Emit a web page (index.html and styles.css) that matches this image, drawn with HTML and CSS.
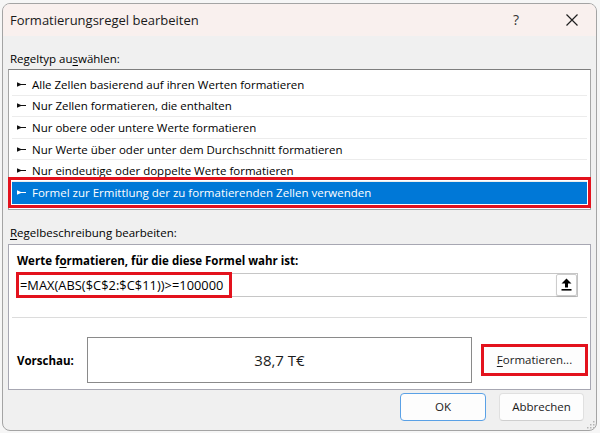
FILE: index.html
```html
<!DOCTYPE html>
<html lang="de">
<head>
<meta charset="utf-8">
<title>Formatierungsregel bearbeiten</title>
<link rel="stylesheet" href="styles.css">
</head>
<body>
<div class="window">
  <div class="titlebar">
    <span class="title">Formatierungsregel bearbeiten</span>
    <span class="help">?</span>
    <span class="close">
      <svg width="12" height="12" viewBox="0 0 12 12"><path d="M0.5 0.5 L11.5 11.5 M11.5 0.5 L0.5 11.5" stroke="#1f1f1f" stroke-width="1.2" fill="none"/></svg>
    </span>
  </div>
  <div class="content">
    <div class="label">Regeltyp au<u>s</u>wählen:</div>
    <div class="list">
      <div class="item"><svg class="arrow" viewBox="0 0 9 5"><path d="M0 0.3 L4 1.9 L9 1.9 L9 3.1 L4 3.1 L0 4.7 Z"/></svg><span>Alle Zellen basierend auf ihren Werten formatieren</span></div>
      <div class="item"><svg class="arrow" viewBox="0 0 9 5"><path d="M0 0.3 L4 1.9 L9 1.9 L9 3.1 L4 3.1 L0 4.7 Z"/></svg><span>Nur Zellen formatieren, die enthalten</span></div>
      <div class="item"><svg class="arrow" viewBox="0 0 9 5"><path d="M0 0.3 L4 1.9 L9 1.9 L9 3.1 L4 3.1 L0 4.7 Z"/></svg><span>Nur obere oder untere Werte formatieren</span></div>
      <div class="item"><svg class="arrow" viewBox="0 0 9 5"><path d="M0 0.3 L4 1.9 L9 1.9 L9 3.1 L4 3.1 L0 4.7 Z"/></svg><span>Nur Werte über oder unter dem Durchschnitt formatieren</span></div>
      <div class="item"><svg class="arrow" viewBox="0 0 9 5"><path d="M0 0.3 L4 1.9 L9 1.9 L9 3.1 L4 3.1 L0 4.7 Z"/></svg><span>Nur eindeutige oder doppelte Werte formatieren</span></div>
      <div class="item selected"><svg class="arrow" viewBox="0 0 9 5"><path d="M0 0.3 L4 1.9 L9 1.9 L9 3.1 L4 3.1 L0 4.7 Z"/></svg><span>Formel zur Ermittlung der zu formatierenden Zellen verwenden</span></div>
      <div class="mark mark-list"></div>
    </div>
    <div class="label label-desc"><u>R</u>egelbeschreibung bearbeiten:</div>
    <div class="panel">
      <div class="panel-top">
        <div class="strong">Werte f<u>o</u>rmatieren, für die diese Formel wahr ist:</div>
        <div class="input">
          <span class="formula">=MAX(ABS($C$2:$C$11))&gt;=100000</span>
          <span class="collapse">
            <svg width="11" height="13" viewBox="0 0 11 13"><path d="M5.5 0.5 L10.5 5.5 L7 5.5 L7 9.5 L4 9.5 L4 5.5 L0.5 5.5 Z" fill="#000"/><rect x="0.5" y="11" width="10" height="1.6" fill="#000"/></svg>
          </span>
          <span class="mark mark-formula"></span>
        </div>
      </div>
      <div class="sep"></div>
      <div class="preview-row">
        <span class="strong preview-label">Vorschau:</span>
        <div class="preview-box">38,7 T€</div>
        <div class="fmt-frame"><span class="fmt-btn"><u>F</u>ormatieren...</span></div>
      </div>
    </div>
    <div class="buttons">
      <span class="btn ok">OK</span>
      <span class="btn">Abbrechen</span>
    </div>
  </div>
  <svg class="grip" width="9" height="9" viewBox="0 0 9 9">
    <rect x="7" y="1" width="1.5" height="1.5" fill="#b5b5b5"/>
    <rect x="4" y="4" width="1.5" height="1.5" fill="#b5b5b5"/>
    <rect x="7" y="4" width="1.5" height="1.5" fill="#b5b5b5"/>
    <rect x="1" y="7" width="1.5" height="1.5" fill="#b5b5b5"/>
    <rect x="4" y="7" width="1.5" height="1.5" fill="#b5b5b5"/>
    <rect x="7" y="7" width="1.5" height="1.5" fill="#b5b5b5"/>
  </svg>
</div>
</body>
</html>
```

FILE: styles.css
```css
html, body {
  margin: 0;
  padding: 0;
}
body {
  width: 600px;
  height: 433px;
  overflow: hidden;
  background: #f6f6f6;
  font-family: "Open Sans", "Noto Sans", "Liberation Sans", sans-serif;
  color: #000;
}
u {
  text-decoration: underline;
  text-decoration-thickness: 1px;
  text-underline-offset: 2px;
}
.window {
  position: relative;
  margin: 3px 0 0 2px;
  width: 595px;
  height: 428px;
  box-sizing: border-box;
  border: 1px solid #a4a4a4;
  border-radius: 8px;
  background: #f0f0f0;
  overflow: hidden;
  display: flex;
  flex-direction: column;
}
.titlebar {
  flex: none;
  height: 32px;
  background: #f9f0ee;
  display: flex;
  align-items: center;
  padding-left: 7px;
}
.title {
  flex: 1;
  font-size: 13px;
  color: #1a1a1a;
  line-height: 18px;
}
.help {
  width: 40px;
  margin-right: 12px;
  text-align: center;
  font-size: 14px;
  color: #333;
  line-height: 18px;
}
.close {
  width: 48px;
  height: 32px;
  display: flex;
  align-items: center;
  justify-content: center;
}
.content {
  flex: 1;
  display: flex;
  flex-direction: column;
  padding: 14px 5px 0 5px;
}
.label {
  font-size: 11.5px;
  line-height: 18px;
  padding-left: 2px;
  margin-bottom: 1px;
}
.label-desc {
  margin-top: 14px;
  margin-bottom: 2px;
}
.list {
  position: relative;
  background: #fff;
  border: 1px solid #a6a6a6;
  border-top-color: #7e7e7e;
  padding: 4px 3px 5px 3px;
}
.item {
  box-sizing: border-box;
  height: 21.6px;
  display: flex;
  align-items: center;
  font-size: 11.5px;
  border-bottom: 1px solid #ececec;
}
.item.selected {
  background: #0078d7;
  color: #fff;
  border-bottom: none;
}
.arrow {
  width: 9px;
  height: 5px;
  margin: 0 6px 0 5px;
  fill: #111;
  flex: none;
}
.selected .arrow {
  fill: #fff;
}
.mark {
  position: absolute;
  box-sizing: border-box;
  border: 3px solid #e3121d;
  pointer-events: none;
}
.mark-list {
  left: -1px;
  top: 107px;
  width: 583px;
  height: 31px;
}
.panel {
  background: #fff;
  border: 1px solid #a7a7b2;
}
.panel-top {
  padding: 7px 0 0 8px;
}
.strong {
  font-size: 11.5px;
  font-weight: 700;
  line-height: 18px;
}
.input {
  position: relative;
  margin-top: 3px;
  width: 561px;
  height: 24px;
  box-sizing: border-box;
  border: 1px solid #c6c6c6;
  display: flex;
  align-items: center;
}
.formula {
  flex: 1;
  padding-left: 2px;
  font-size: 12.8px;
  letter-spacing: 0.05px;
}
.collapse {
  width: 21px;
  height: 22px;
  box-sizing: border-box;
  border: 1px solid #cdcdcd;
  border-radius: 2px;
  box-shadow: 0 1px 1px rgba(0,0,0,0.12);
  display: flex;
  align-items: center;
  justify-content: center;
  background: #fff;
}
.mark-formula {
  left: -2px;
  top: -2px;
  width: 216px;
  height: 26px;
}
.sep {
  margin: 20px 3px 0 3px;
  height: 1px;
  background: #dcdcdc;
}
.preview-row {
  display: flex;
  align-items: center;
  padding: 19px 2px 6px 8px;
}
.preview-label {
  width: 70px;
  padding-top: 3px;
}
.preview-box {
  width: 385px;
  height: 46px;
  box-sizing: border-box;
  border: 1px solid #8a8a8a;
  display: flex;
  align-items: center;
  justify-content: center;
  font-size: 15px;
  color: #1c1c1c;
}
.fmt-frame {
  margin-left: 9px;
  width: 107px;
  height: 32px;
  box-sizing: border-box;
  border: 3px solid #e3121d;
  display: flex;
}
.fmt-btn {
  flex: 1;
  background: #fdfdfd;
  display: flex;
  align-items: center;
  justify-content: center;
  font-size: 11.5px;
  color: #1a1a1a;
  padding-bottom: 1px;
}
.buttons {
  display: flex;
  justify-content: flex-end;
  gap: 13px;
  margin-top: 3px;
  margin-right: 7px;
}
.btn {
  width: 85px;
  height: 28px;
  box-sizing: border-box;
  border: 1px solid #e0e0e0;
  border-bottom-color: #cfcfcf;
  border-radius: 4px;
  background: #fdfdfd;
  display: flex;
  align-items: center;
  justify-content: center;
  font-size: 11.5px;
  color: #1a1a1a;
}
.btn.ok {
  width: 86px;
  border-color: #5aa1e6;
}
.grip {
  position: absolute;
  right: 1px;
  bottom: 1px;
}
```
